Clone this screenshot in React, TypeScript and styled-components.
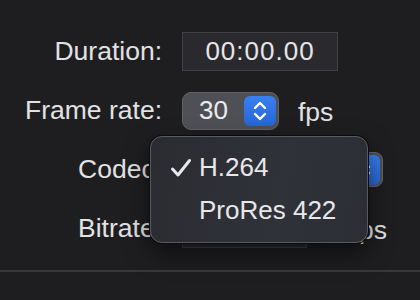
import React from "react";
import styled, { createGlobalStyle } from "styled-components";

const GlobalStyle = createGlobalStyle`
  html, body {
    margin: 0;
    padding: 0;
    background: #1e1e21;
  }
  body {
    font-family: "Liberation Sans", Arial, sans-serif;
    color: #e2e2e4;
  }
`;

const Page = styled.div`
  width: 420px;
  height: 300px;
  overflow: hidden;
  padding-top: 22px;
  box-sizing: border-box;
`;

const Form = styled.div`
  display: grid;
  grid-template-columns: 162px 1fr;
  grid-auto-rows: 59px;
  column-gap: 20px;
  align-items: center;
`;

const Label = styled.div`
  justify-self: end;
  font-size: 26.5px;
  color: #e2e2e4;
  white-space: nowrap;
`;

const Cell = styled.div<{ $gap?: number }>`
  position: relative;
  display: flex;
  align-items: center;
  gap: ${(p) => p.$gap ?? 20}px;
`;

const Field = styled.div<{ $width: number }>`
  width: ${(p) => p.$width}px;
  height: 39px;
  box-sizing: border-box;
  background: #2a2a2e;
  border: 1px solid #414145;
  display: flex;
  align-items: center;
  justify-content: center;
  font-size: 26px;
  letter-spacing: 1px;
  color: #e6e6e8;
`;

const Unit = styled.span`
  font-size: 26.5px;
  color: #e2e2e4;
  padding-top: 4px;
`;

const Stepper = styled.div`
  width: 97px;
  height: 38px;
  box-sizing: border-box;
  border-radius: 9px;
  background: #4f5055;
  border: 1px solid #626267;
  display: flex;
  align-items: center;
  justify-content: space-between;
  padding: 0 2px 0 16px;
  font-size: 26px;
  color: #ececee;
`;

const BlueKnob = styled.div<{ $width: number }>`
  width: ${(p) => p.$width}px;
  height: 30px;
  border-radius: 6px;
  background: linear-gradient(#3a7ff0, #2766d6);
  display: flex;
  align-items: center;
  justify-content: center;
`;

const Popup = styled.div`
  width: 201px;
  height: 35px;
  box-sizing: border-box;
  border-radius: 8px;
  background: #4f5055;
  border: 1px solid #66666b;
  display: flex;
  align-items: center;
  justify-content: flex-end;
  padding-right: 2px;
`;

const Menu = styled.div`
  position: absolute;
  left: -32px;
  top: -16px;
  width: 218px;
  height: 107px;
  box-sizing: border-box;
  padding: 9px 0 12px;
  border-radius: 12px;
  background: linear-gradient(100deg, #2b2c31, #30323a 60%, #2c2e34);
  border: 1px solid #5a5b60;
  box-shadow: 0 0 0 1px #0b0b0d, 0 10px 24px rgba(0, 0, 0, 0.55);
  z-index: 2;
`;

const MenuItem = styled.div`
  position: relative;
  height: 43px;
  display: flex;
  align-items: center;
  padding-left: 48px;
  font-size: 26px;
  color: #e8e8ea;
`;

const Check = styled.span`
  position: absolute;
  left: 19px;
  top: 12px;
  display: flex;
`;

const Divider = styled.div`
  margin-top: 12px;
  height: 2px;
  background: #38383c;
`;

const Chevrons = () => (
  <svg width="16" height="24" viewBox="0 0 16 24" fill="none">
    <path d="M3 9 L8 4 L13 9" stroke="#fff" strokeWidth="2.4" strokeLinecap="round" strokeLinejoin="round" />
    <path d="M3 15 L8 20 L13 15" stroke="#fff" strokeWidth="2.4" strokeLinecap="round" strokeLinejoin="round" />
  </svg>
);

const CheckMark = () => (
  <svg width="22" height="20" viewBox="0 0 22 20" fill="none">
    <path d="M2.5 11 L8 17 L19.5 2.5" stroke="#e8e8ea" strokeWidth="3" strokeLinecap="round" strokeLinejoin="round" />
  </svg>
);

const App = () => {
  return (
    <Page>
      <GlobalStyle />
      <Form>
        <Label>Duration:</Label>
        <Cell>
          <Field $width={156}>00:00.00</Field>
        </Cell>

        <Label>Frame rate:</Label>
        <Cell $gap={19}>
          <Stepper>
            30
            <BlueKnob $width={32}>
              <Chevrons />
            </BlueKnob>
          </Stepper>
          <Unit>fps</Unit>
        </Cell>

        <Label>Codec:</Label>
        <Cell>
          <Popup>
            <BlueKnob $width={32}>
              <Chevrons />
            </BlueKnob>
          </Popup>
          <Menu>
            <MenuItem>
              <Check>
                <CheckMark />
              </Check>
              H.264
            </MenuItem>
            <MenuItem>ProRes 422</MenuItem>
          </Menu>
        </Cell>

        <Label>Bitrate:</Label>
        <Cell $gap={24}>
          <Field $width={125} />
          <Unit>kbps</Unit>
        </Cell>
      </Form>
      <Divider />
    </Page>
  );
};

export default App;
